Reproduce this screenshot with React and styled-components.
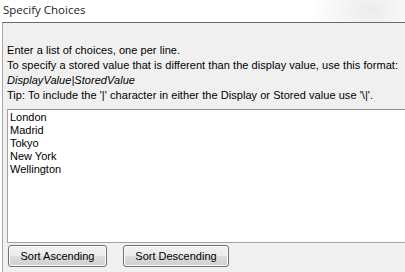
import React from "react";
import styled, { createGlobalStyle } from "styled-components";

const GlobalStyle = createGlobalStyle`
  html, body {
    margin: 0;
    padding: 0;
    background: #ffffff;
    overflow: hidden;
  }
  body {
    font-family: "Liberation Sans", Arial, sans-serif;
  }
`;

const StyledWindow = styled.div`
  width: 405px;
  height: 272px;
  display: flex;
  flex-direction: column;
  overflow: hidden;
  background: radial-gradient(
    ellipse 60px 40px at 370px 10px,
    #ececec 0%,
    #ffffff 100%
  );
`;

const StyledTitle = styled.div`
  height: 22px;
  padding-left: 3px;
  font-family: "Open Sans", "Noto Sans", sans-serif;
  font-size: 11.5px;
  line-height: 20px;
  color: #1e1e1e;
`;

const StyledPanel = styled.div`
  flex: 1;
  margin-left: 2px;
  margin-right: -40px;
  border-top: 1px solid #6b6b6b;
  border-left: 1px solid #a8a8a8;
  background: #f0f0f0;
  padding: 20px 0 0 4px;
  display: flex;
  flex-direction: column;
`;

const StyledHelp = styled.div`
  font-size: 11px;
  line-height: 15px;
  letter-spacing: 0.05px;
  color: #000;
`;

const StyledLine = styled.div`
  font-style: ${(props) => (props.italic ? "italic" : "normal")};
  white-space: nowrap;
`;

const StyledList = styled.textarea`
  margin-top: 6px;
  width: 430px;
  height: 134px;
  box-sizing: border-box;
  border: 1px solid #a3a3a3;
  border-top-color: #8e8e8e;
  background: #ffffff;
  padding: 1px 2px;
  font-family: "Liberation Sans", Arial, sans-serif;
  font-size: 11px;
  line-height: 13px;
  color: #000;
  resize: none;
  outline: none;
  overflow: hidden;
`;

const StyledButtonRow = styled.div`
  display: flex;
  gap: 16px;
  margin-top: 2px;
  padding-left: 1px;
`;

const StyledButton = styled.button`
  width: ${(props) => props.width}px;
  height: 22px;
  box-sizing: border-box;
  border: 1px solid #707070;
  border-radius: 3px;
  background: linear-gradient(
    to bottom,
    #f2f2f2 0%,
    #ebebeb 50%,
    #dddddd 50%,
    #cfcfcf 100%
  );
  box-shadow: inset 0 0 0 1px #fcfcfc;
  font-family: "Liberation Sans", Arial, sans-serif;
  font-size: 11px;
  color: #000;
  padding: 0;
`;

const choices = ["London", "Madrid", "Tokyo", "New York", "Wellington"];

const App = () => {
  return (
    <>
      <GlobalStyle />
      <StyledWindow>
        <StyledTitle>Specify Choices</StyledTitle>
        <StyledPanel>
          <StyledHelp>
            <StyledLine>Enter a list of choices, one per line.</StyledLine>
            <StyledLine>
              To specify a stored value that is different than the display
              value, use this format:
            </StyledLine>
            <StyledLine italic>DisplayValue|StoredValue</StyledLine>
            <StyledLine>
              Tip: To include the '|' character in either the Display or
              Stored value use '\|'.
            </StyledLine>
          </StyledHelp>
          <StyledList readOnly defaultValue={choices.join("\n")} />
          <StyledButtonRow>
            <StyledButton width={99}>Sort Ascending</StyledButton>
            <StyledButton width={106}>Sort Descending</StyledButton>
          </StyledButtonRow>
        </StyledPanel>
      </StyledWindow>
    </>
  );
};

export default App;
